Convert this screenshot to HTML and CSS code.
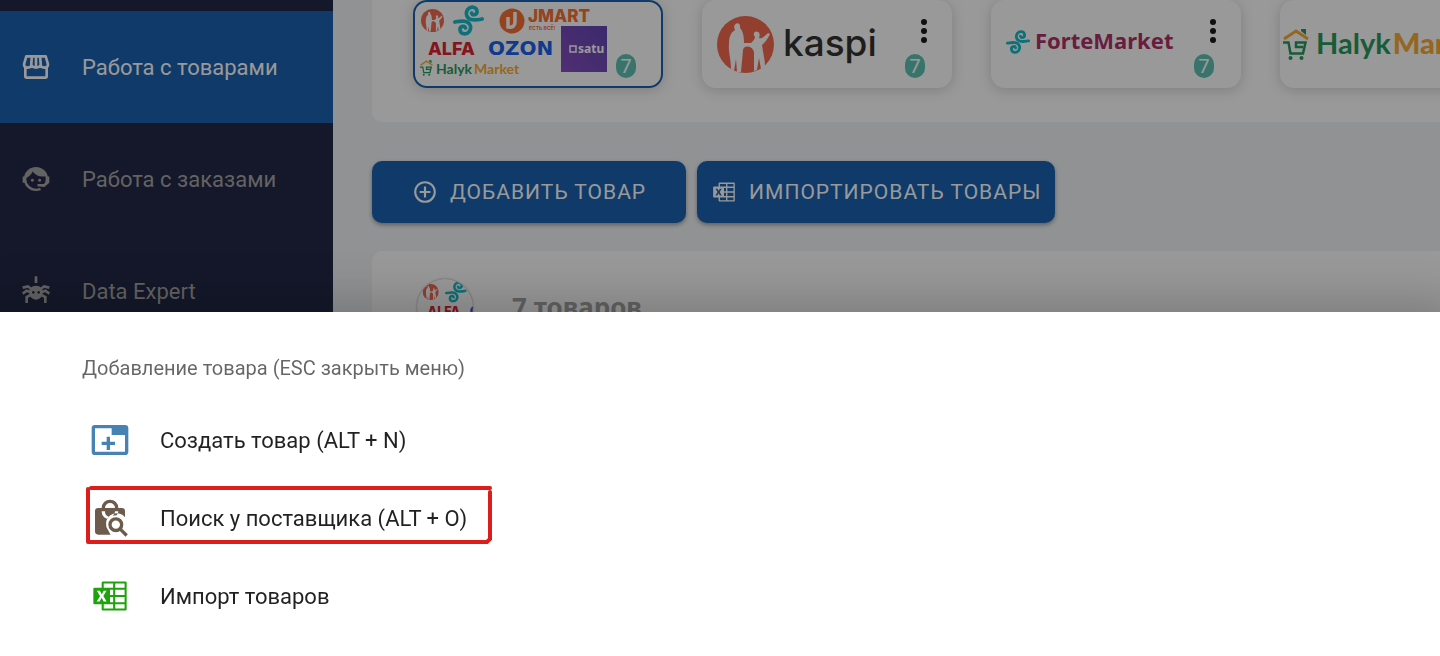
FILE: index.html
```html
<!DOCTYPE html>
<html lang="ru">
<head>
  <meta charset="UTF-8">
  <meta name="viewport" content="width=device-width, initial-scale=1.0">
  <title>Работа с товарами</title>
  <link rel="stylesheet" href="styles.css">
</head>
<body>
  <svg class="sprite" aria-hidden="true">
    <symbol id="kaspi" viewBox="0 0 57 57">
      <circle cx="28.5" cy="28.5" r="28.5" fill="#f25a3e"/>
      <path fill="#fff" d="M17 11C18 6 24 6 23 12C26 15 27 20 27 27L34 27C36 25 38 23 38 21C35 18 38 14 41 16C43 17 43 19 42 22C45 23 48 20 51 17L53 18C51 23 47 27 45 29C46 37 48 44 48 50L44 53L42 42L40 54L37 55L37 36C36 30 27 28 26 34L24 56L20 56L19 43L17 55L14 53C14 42 11 36 12 28C12 22 13 17 18 14Z"/>
    </symbol>
    <symbol id="forte" viewBox="0 0 24 24">
      <g fill="none" stroke="#00b4c4" stroke-width="2.8" stroke-linecap="round">
        <path d="M14.4 6.2C15 8.400 18.800 7.800 18.600 4.800C18.300 1.200 13.600 .6 11.400 3.400C9.200 6.600 10.600 10.800 15 11.400C18 11.800 20.400 11.200 22.600 10.800"/>
        <path d="M9.600 17.800C9 15.600 5.200 16.200 5.400 19.200C5.700 22.800 10.400 23.400 12.600 20.600C14.800 17.400 13.400 13.200 9 12.600C6 12.200 3.600 12.800 1.400 13.200"/>
      </g>
    </symbol>
    <symbol id="halyk" viewBox="0 0 26 31">
      <path fill="#0f8f4c" d="M18 0h5v6l-5-4z"/>
      <path fill="none" stroke="#f5a21e" stroke-width="3" d="M1 10L13 2L25 10"/>
      <path fill="none" stroke="#0f8f4c" stroke-width="2.500" d="M0 13.500H5.500L7.500 24.500H20L22.500 13.500H13V18H20"/>
      <circle cx="7.500" cy="29" r="2" fill="#0f8f4c"/>
      <circle cx="18.500" cy="29" r="2" fill="#0f8f4c"/>
    </symbol>
    <symbol id="excel" viewBox="0 0 24 24">
      <path fill="currentColor" d="M21.17 3.25Q21.5 3.25 21.76 3.5 22 3.74 22 4.08V19.92Q22 20.26 21.76 20.5 21.5 20.75 21.17 20.75H7.83Q7.5 20.75 7.24 20.5 7 20.26 7 19.92V17H2.83Q2.5 17 2.24 16.76 2 16.5 2 16.17V7.83Q2 7.5 2.24 7.24 2.5 7 2.83 7H7V4.08Q7 3.74 7.24 3.5 7.5 3.25 7.83 3.25M7 13.06L8.18 15.28H9.97L8 12.06L9.93 8.89H8.22L7.13 10.9L7.09 10.96L7.06 11.03Q6.8 10.5 6.5 9.96 6.25 9.43 5.97 8.89H4.16L6.05 12.08L4 15.28H5.78M13.88 19.5V17H8.25V19.5M13.88 15.75V12.63H12V15.75M13.88 11.38V8.25H12V11.38M13.88 7V4.5H8.25V7M20.75 19.5V17H15.13V19.5M20.75 15.75V12.63H15.13V15.75M20.75 11.38V8.25H15.13V11.38M20.75 7V4.5H15.13V7Z"/>
    </symbol>
    <symbol id="dots" viewBox="0 0 8 24">
      <circle cx="4" cy="3" r="3"/><circle cx="4" cy="12" r="3"/><circle cx="4" cy="21" r="3"/>
    </symbol>
  </svg>

  <div class="app">
    <nav class="sidebar">
      <a class="active" href="#">
        <svg viewBox="0 0 24 24" fill="none" stroke="currentColor" stroke-width="2" stroke-linejoin="round">
          <path d="M4 12v7q0 1 1 1h14q1 0 1-1V12"/>
          <path d="M4.700 4h14.600L21 10Q20.800 12.500 18.500 12.500Q16.500 12.500 15.300 11Q14 12.500 12 12.500T8.700 11Q7.500 12.500 5.500 12.500Q3.200 12.500 3 10ZM8.900 4L8.400 11M12 4V12M15.100 4L15.600 11"/>
        </svg>
        <span>Работа с товарами</span>
      </a>
      <a href="#">
        <svg viewBox="0 0 24 24" fill="currentColor">
          <path d="M18.720,14.760C19.070,13.910 19.260,13 19.260,12C19.260,11.280 19.150,10.590 18.960,9.950C18.310,10.100 17.630,10.180 16.920,10.180C13.860,10.180 11.150,8.670 9.500,6.340C8.610,8.500 6.910,10.260 4.770,11.220C4.730,11.470 4.730,11.740 4.730,12A7.270,7.270 0 0,0 12,19.270C13.050,19.270 14.060,19.040 14.970,18.630C15.540,19.720 15.800,20.260 15.780,20.260C14.140,20.810 12.870,21.080 12,21.080C9.580,21.080 7.270,20.130 5.570,18.420C4.530,17.380 3.760,16.110 3.330,14.730H2V10.180H3.090C3.930,6.040 7.600,2.920 12,2.920C14.400,2.920 16.710,3.870 18.420,5.580C19.690,6.840 20.540,8.450 20.890,10.180H22V14.730H21.940L18.380,18L13.080,17.400V15.730H17.910L18.720,14.760M9.270,11.770A1.140,1.140 0 1,1 9.260,11.770M14.720,11.770A1.140,1.140 0 1,1 14.710,11.770Z"/>
        </svg>
        <span>Работа с заказами</span>
      </a>
      <a href="#">
        <svg viewBox="0 0 24 24" fill="currentColor">
          <path fill-rule="evenodd" d="M11 1h2v5h-2zM12 8C15.500 8 17 10.500 17 13C17 16.500 14.500 18.500 12 18.500S7 16.500 7 13C7 10.500 8.500 8 12 8ZM10 12a1 1 0 1 0 .01 0ZM14 12a1 1 0 1 0 .01 0Z"/>
          <path fill="none" stroke="currentColor" stroke-width="2" d="M9 11L6 8.500L2 9.500M15 11L18 8.500L22 9.500M8 13L5 11.800L2 14M16 13L19 11.800L22 14M8 15L5 16.500V21M16 15L19 16.500V21"/>
        </svg>
        <span>Data Expert</span>
      </a>
    </nav>

    <main>
      <section class="markets">
        <article class="market-card selected">
          <svg class="collage" viewBox="0 0 250 88" role="img" aria-label="Все магазины">
            <linearGradient id="satu-bg" x1="0" y1="1" x2="1" y2="0">
              <stop offset="0" stop-color="#7a3ab8"/><stop offset="1" stop-color="#5034ac"/>
            </linearGradient>
            <g id="all-markets">
              <use href="#kaspi" x="8" y="9" width="23" height="23"/>
              <use href="#forte" x="40" y="5" width="31" height="31"/>
              <circle cx="99" cy="21" r="12.500" fill="#f5601c"/>
              <path fill="none" stroke="#fff" stroke-width="3.500" d="M102 12V22Q102 28 95 27V17"/>
              <text class="jmart" x="115" y="22">JMART</text>
              <text class="jmart-sub" x="116" y="30">ЕСТЬ ВСЁ!</text>
              <text class="alfa" x="15" y="55">ALFA</text>
              <text class="ozon" x="75" y="55">OZON</text>
              <path fill="url(#satu-bg)" d="M148 26h46v46h-46z"/>
              <path fill="none" stroke="#fff" stroke-width="1.500" d="M157 46h6v6h-6z"/>
              <text class="satu" x="165" y="53">satu</text>
              <use href="#halyk" x="7" y="60" width="13" height="16"/>
              <text class="halyk-small" x="23" y="74">Halyk<tspan class="market" dx="2">Market</tspan></text>
            </g>
          </svg>
          <span class="badge">7</span>
        </article>
        <article class="market-card">
          <div class="logo kaspi"><svg><use href="#kaspi"/></svg><span>kaspi</span></div>
          <button class="more" type="button" aria-label="Меню"><svg><use href="#dots"/></svg></button>
          <span class="badge">7</span>
        </article>
        <article class="market-card">
          <div class="logo forte"><svg><use href="#forte"/></svg><span>ForteMarket</span></div>
          <button class="more" type="button" aria-label="Меню"><svg><use href="#dots"/></svg></button>
          <span class="badge">7</span>
        </article>
        <article class="market-card">
          <div class="logo halyk"><svg><use href="#halyk"/></svg><span>Halyk<b>Market</b></span></div>
        </article>
      </section>

      <div class="actions">
        <button class="btn btn-add" type="button">
          <svg viewBox="0 0 24 24"><path fill="currentColor" d="M12,20C7.590,20 4,16.410 4,12C4,7.590 7.590,4 12,4C16.410,4 20,7.590 20,12C20,16.410 16.410,20 12,20M12,2A10,10 0 0,0 2,12A10,10 0 0,0 12,22A10,10 0 0,0 22,12A10,10 0 0,0 12,2M13,7H11V11H7V13H11V17H13V13H17V11H13V7Z"/></svg>
          Добавить товар
        </button>
        <button class="btn" type="button">
          <svg><use href="#excel"/></svg>
          Импортировать товары
        </button>
      </div>

      <section class="products">
        <div class="avatar"><svg viewBox="0 2 80 80"><use href="#all-markets"/></svg></div>
        <h2>7 товаров</h2>
      </section>
    </main>
  </div>

  <div class="overlay"></div>

  <div class="sheet" role="menu">
    <p class="sheet-title">Добавление товара (ESC закрыть меню)</p>
    <button class="sheet-item create" type="button" role="menuitem">
      <svg class="icon" viewBox="0 0 24 24"><path fill="currentColor" d="M3,3A2,2 0 0,0 1,5V19A2,2 0 0,0 3,21H21A2,2 0 0,0 23,19V5A2,2 0 0,0 21,3H3M3,5H13V9H21V19H3V5M10,10V13H7V15H10V18H12V15H15V13H12V10H10Z"/></svg>
      <span>Создать товар (ALT + N)</span>
    </button>
    <button class="sheet-item search" type="button" role="menuitem">
      <svg class="icon" viewBox="0 0 24 24">
        <path fill="currentColor" d="M5 6H7A5 5 0 0 1 17 6H19A2 2 0 0 1 21 8V11.500A6 6 0 0 0 11 19.500L12.300 22H5A2 2 0 0 1 3 20V8A2 2 0 0 1 5 6ZM9 6H15A3 3 0 0 0 9 6ZM7 8A5 5 0 0 0 10 12.500L11.500 11.200A3 3 0 0 1 9 8ZM15 8A3 3 0 0 1 13.500 10.700L16 10.400Q17 9.400 17 8Z"/>
        <path fill="none" stroke="currentColor" stroke-width="2" d="M19 16A3.500 3.500 0 1 1 12 16A3.500 3.500 0 1 1 19 16M18 18.500L22 22.500"/>
      </svg>
      <span>Поиск у поставщика (ALT + O)</span>
      <svg class="marker" viewBox="0 0 408 60" aria-hidden="true">
        <path d="M6 3H405M3 4V56M405 7V54L402 57H3"/>
      </svg>
    </button>
    <button class="sheet-item import" type="button" role="menuitem">
      <svg class="icon"><use href="#excel"/></svg>
      <span>Импорт товаров</span>
    </button>
  </div>
</body>
</html>
```

FILE: styles.css
```css
* {
  margin: 0;
  padding: 0;
  box-sizing: border-box;
}
body {
  font-family: Roboto, sans-serif;
  background-color: #eff2f6;
  height: 100vh;
  overflow: hidden;
}
button {
  font: inherit;
  border: none;
  background: none;
  cursor: pointer;
}
svg {
  flex: none;
}
.sprite {
  position: absolute;
  width: 0;
  height: 0;
}
.app {
  display: flex;
  min-height: 100vh;
}

/* sidebar */
.sidebar {
  flex: none;
  width: 333px;
  padding-top: 11px;
  background-color: #0b1133;
}
.sidebar a {
  display: flex;
  align-items: center;
  gap: 30px;
  height: 112px;
  padding-left: 20px;
  font-size: 22px;
  color: #9b9b9b;
  text-decoration: none;
}
.sidebar a.active {
  background-color: #0051a8;
  color: #fff;
}
.sidebar svg {
  width: 32px;
  height: 32px;
}

main {
  flex: 1;
  min-width: 0;
  display: flex;
  flex-direction: column;
  padding-left: 39px;
}

/* market cards */
.markets {
  display: flex;
  gap: 39px;
  padding: 0 0 34px 41px;
  background-color: #fff;
  border-radius: 0 0 0 10px;
  overflow: hidden;
}
.market-card {
  flex: none;
  position: relative;
  display: flex;
  align-items: center;
  width: 250px;
  height: 88px;
  border-radius: 14px;
  background-color: #fff;
  box-shadow: 0 2px 14px rgba(0, 0, 0, .2);
}
.market-card.selected {
  box-shadow: inset 0 0 0 2px #0051a8, 0 2px 14px rgba(0, 0, 0, .2);
}
.collage {
  width: 100%;
  height: 100%;
}
.jmart {
  font: 800 17px Inter, sans-serif;
  fill: #f5601c;
}
.jmart-sub {
  font: 700 5px Inter, sans-serif;
  fill: #f5601c;
}
.alfa {
  font: 800 18px Inter, sans-serif;
  fill: #d80c1c;
}
.ozon {
  font: 700 20px "DejaVu Sans", sans-serif;
  fill: #0052ec;
}
.satu {
  font: 700 12px "Noto Sans", sans-serif;
  fill: #fff;
}
.halyk-small {
  font: 700 14px Lato, sans-serif;
  fill: #0f8f4c;
}
.market {
  fill: #f5a21e;
}
.logo {
  display: flex;
  align-items: center;
}
.logo span {
  padding-bottom: 4px;
}
.logo.kaspi {
  gap: 9px;
  padding-left: 15px;
  font: 500 37px/1 Inter, sans-serif;
  color: #1d1d18;
}
.kaspi svg {
  width: 57px;
  height: 57px;
}
.logo.forte {
  gap: 5px;
  padding: 0 0 4px 15px;
  font: 700 22px "Noto Sans", sans-serif;
  color: #a81858;
}
.forte svg {
  width: 24px;
  height: 24px;
}
.logo.halyk {
  gap: 7px;
  padding-left: 3px;
  font: 700 29px Lato, sans-serif;
  color: #0f8f4c;
}
.halyk svg {
  width: 26px;
  height: 31px;
}
.halyk b {
  margin-left: 2px;
  color: #f5a21e;
}
.more {
  position: absolute;
  top: 19px;
  right: 24px;
  line-height: 0;
}
.more svg {
  width: 8px;
  height: 24px;
}
.badge {
  position: absolute;
  right: 27px;
  bottom: 10px;
  width: 20px;
  height: 24px;
  border-radius: 10px;
  background-color: #4dbbaa;
  color: #fff;
  font: 20px/24px "Noto Sans", sans-serif;
  text-align: center;
}

/* buttons */
.actions {
  display: flex;
  gap: 11px;
  padding: 39px 0 28px;
}
.btn {
  display: flex;
  align-items: center;
  gap: 12px;
  height: 62px;
  padding: 0 14px;
  border-radius: 10px;
  background-color: #0051a8;
  box-shadow: 0 2px 4px rgba(0, 0, 0, .4);
  color: #fff;
  font-size: 21px;
  letter-spacing: 1px;
  text-transform: uppercase;
}
.btn-add {
  padding: 0 40px;
}
.btn svg {
  width: 26px;
  height: 26px;
}

/* products */
.products {
  flex: 1;
  display: flex;
  align-items: flex-start;
  gap: 39px;
  padding: 28px 45px;
  background-color: #fff;
  border-radius: 10px 0 0 0;
}
.avatar {
  width: 56px;
  height: 56px;
  border-radius: 50%;
  overflow: hidden;
  box-shadow: 0 0 2px rgba(0, 0, 0, .5);
}
.avatar svg {
  width: 56px;
  height: 56px;
}
.products h2 {
  font: 700 26px/56px "Noto Sans", sans-serif;
  color: #9b9b9b;
}

.overlay {
  position: fixed;
  inset: 0;
  background-color: rgba(33, 33, 33, .46);
}

/* bottom sheet */
.sheet {
  position: fixed;
  left: 0;
  right: 0;
  bottom: 0;
  padding: 24px 82px 21px;
  background-color: #fff;
  box-shadow: 0 9px 46px 20px rgba(0, 0, 0, .2);
}
.sheet-title {
  font-size: 20px;
  line-height: 65px;
  color: rgba(0, 0, 0, .6);
}
.sheet-item {
  position: relative;
  display: flex;
  align-items: center;
  gap: 30px;
  width: 100%;
  height: 78px;
  padding-left: 8px;
  font-size: 22px;
  color: rgba(0, 0, 0, .87);
}
.icon {
  width: 40px;
  height: 40px;
}
.create .icon {
  color: #4682b4;
}
.search .icon {
  color: #6d5c4d;
}
.import .icon {
  color: #1ea30c;
}
.marker {
  position: absolute;
  left: 3px;
  top: 6px;
  width: 408px;
  height: 60px;
  fill: none;
  stroke: #dd1c1c;
  stroke-width: 4;
  stroke-linecap: round;
}
```
